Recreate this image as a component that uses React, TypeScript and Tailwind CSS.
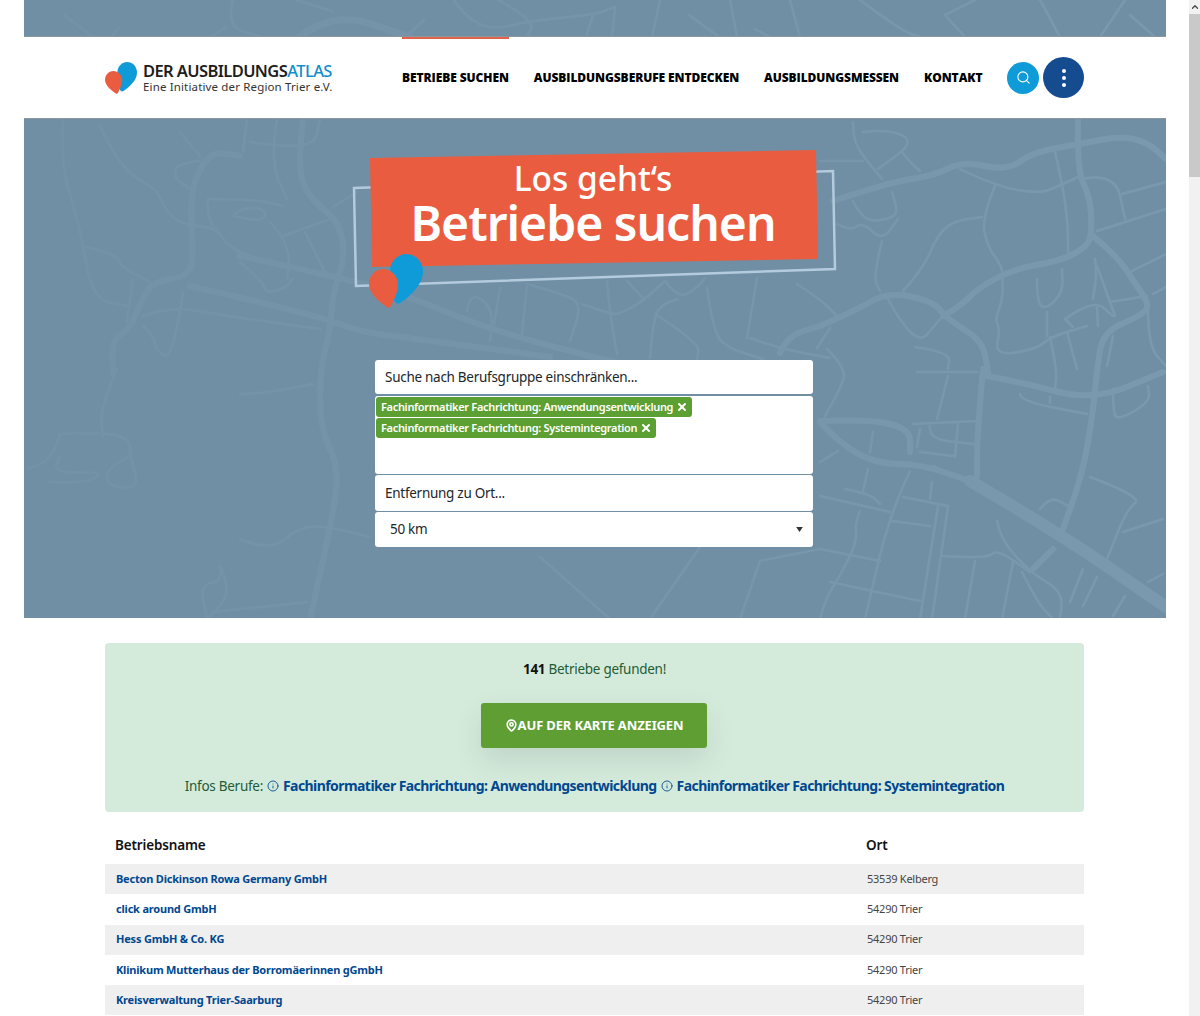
import { ChevronUp, Info, MapPin, Search, X } from "lucide-react";

type Pt = [number, number];

// map traced in page coordinates, the viewBox below takes care of the offset
const wideRoads: Pt[][] = [
  [[833, 200], [890, 181], [933, 175], [963, 160], [1007, 170], [1033, 151], [1080, 143], [1120, 135], [1147, 141], [1166, 158]],
  [[1078, 118], [1077, 171], [1090, 195], [1092, 231], [1087, 246], [1060, 260], [1013, 268], [977, 288], [963, 303], [943, 315]],
  [[820, 325], [853, 311], [887, 291], [933, 300], [947, 318], [983, 340], [988, 372]],
  [[1093, 235], [1117, 255], [1137, 285], [1150, 305], [1140, 315], [1103, 331], [1097, 368], [1093, 411], [1083, 471], [1063, 528]],
  [[983, 368], [977, 435], [977, 475]],
  [[987, 375], [1020, 381], [1093, 400], [1163, 371]],
  [[820, 420], [870, 418], [910, 428], [910, 451]],
  [[820, 421], [840, 443], [877, 463], [920, 463], [970, 480]],
  [[240, 155], [220, 151], [207, 156], [190, 188], [193, 251], [190, 275], [153, 281], [142, 298], [130, 328], [112, 338], [113, 372]],
  [[303, 118], [297, 168], [310, 198], [340, 221], [345, 258], [333, 291], [330, 331], [320, 368], [320, 428], [340, 468], [330, 528], [310, 618]],
  [[240, 255], [360, 281], [413, 297], [493, 330], [617, 362]],
  [[190, 285], [320, 315], [360, 331], [417, 338], [550, 356]],
  [[780, 352], [787, 335], [820, 325]],
  [[1053, 548], [1033, 568]],
];

const widestRoads: Pt[][] = [[[970, 480], [1053, 528], [1166, 606]]];

const thinRoads: Pt[][] = [
  [[853, 121], [853, 138], [863, 155], [882, 178]],
  [[863, 131], [890, 128], [915, 141], [878, 168]],
  [[902, 151], [910, 161], [920, 170]],
  [[820, 160], [863, 160]],
  [[853, 200], [863, 221], [890, 218], [898, 211], [892, 191]],
  [[837, 223], [850, 230], [863, 221], [882, 240], [898, 218]],
  [[882, 240], [873, 276], [880, 290]],
  [[903, 290], [923, 268], [937, 235], [953, 220], [982, 216]],
  [[995, 185], [982, 216], [987, 245], [1002, 265], [1003, 281], [1002, 301], [995, 318], [1000, 328], [995, 355], [1037, 348], [1050, 336], [1087, 325]],
  [[960, 168], [995, 185], [1040, 193], [1063, 183], [1078, 176]],
  [[1055, 151], [1063, 185], [1068, 225], [1068, 251]],
  [[1080, 178], [1115, 171], [1125, 218]],
  [[1122, 193], [1166, 181]],
  [[1097, 230], [1166, 208]],
  [[1130, 271], [1166, 253]],
  [[888, 298], [915, 348], [940, 318]],
  [[915, 346], [950, 351], [948, 368]],
  [[1037, 278], [1037, 303], [1047, 308], [1063, 291], [1062, 268]],
  [[1047, 311], [1047, 335]],
  [[1065, 318], [1093, 298], [1113, 315]],
  [[1095, 258], [1097, 271], [1093, 298]],
  [[1097, 265], [1115, 315]],
  [[1110, 301], [1147, 295]],
  [[1097, 305], [1098, 325]],
  [[1065, 318], [1073, 326]],
  [[1148, 305], [1148, 345], [1166, 365]],
  [[1067, 331], [1077, 368]],
  [[1050, 336], [1057, 368], [1055, 388]],
  [[1153, 293], [1166, 286]],
  [[1113, 335], [1107, 365]],
  [[827, 348], [847, 368], [840, 388], [825, 415]],
  [[917, 371], [977, 371]],
  [[948, 375], [937, 418]],
  [[913, 423], [977, 420]],
  [[930, 425], [928, 438], [973, 443]],
  [[958, 423], [955, 456]],
  [[1020, 393], [1020, 400], [1087, 413]],
  [[1050, 396], [1050, 402]],
  [[1113, 388], [1113, 408], [1117, 420], [1150, 401], [1148, 385]],
  [[1090, 476], [1143, 496], [1127, 508], [1107, 558]],
  [[1123, 531], [1163, 518]],
  [[1040, 508], [1050, 495], [1068, 505]],
  [[997, 520], [1000, 538], [1030, 571], [1063, 591], [1060, 618]],
  [[1022, 571], [1037, 601], [1053, 618]],
  [[943, 555], [987, 558], [997, 548], [1030, 571]],
  [[1013, 561], [1002, 618]],
  [[975, 560], [965, 618]],
  [[948, 505], [932, 618]],
  [[938, 505], [920, 618]],
  [[903, 496], [948, 505]],
  [[910, 470], [890, 511], [865, 618]],
  [[932, 481], [930, 498]],
  [[892, 520], [930, 525]],
  [[868, 468], [863, 490]],
  [[820, 495], [890, 511]],
  [[845, 488], [870, 493], [880, 503]],
  [[860, 510], [855, 521], [857, 541], [840, 575], [827, 595], [820, 618]],
  [[820, 548], [880, 560]],
  [[830, 581], [877, 591], [920, 600]],
  [[1083, 568], [1070, 601]],
  [[1097, 576], [1083, 605]],
  [[1125, 595], [1113, 615]],
  [[1148, 581], [1163, 573]],
  [[873, 431], [870, 451]],
  [[920, 428], [917, 446]],
  [[920, 451], [953, 455]],
  [[933, 465], [960, 478]],
  [[820, 461], [838, 450]],
  [[467, 310], [470, 290], [493, 307], [490, 340]],
  [[500, 287], [493, 330]],
  [[527, 283], [522, 333]],
  [[527, 283], [563, 293], [582, 303], [570, 340]],
  [[582, 303], [610, 313], [620, 313], [643, 300], [665, 280]],
  [[607, 280], [610, 313], [617, 353]],
  [[627, 280], [643, 297]],
  [[665, 280], [678, 298], [697, 287], [705, 277]],
  [[678, 298], [660, 303], [653, 323], [650, 357]],
  [[655, 313], [700, 342], [697, 358]],
  [[707, 287], [713, 330], [727, 347], [763, 358]],
  [[757, 277], [747, 337]],
  [[750, 337], [777, 347], [830, 357]],
  [[797, 283], [820, 298], [837, 315]],
  [[817, 347], [830, 327]],
  [[63, 118], [60, 161], [80, 225], [92, 298], [127, 305]],
  [[82, 245], [117, 253], [120, 265], [150, 281]],
  [[100, 125], [120, 168], [157, 188], [163, 205], [177, 221], [197, 225], [217, 228], [230, 248], [270, 262]],
  [[200, 160], [178, 162], [173, 176], [190, 188]],
  [[208, 198], [253, 198], [283, 205]],
  [[233, 215], [240, 206], [267, 208], [263, 221], [233, 215]],
  [[208, 198], [207, 218], [220, 232]],
  [[270, 221], [283, 235], [290, 258], [287, 278]],
  [[283, 235], [330, 218]],
  [[305, 231], [327, 275]],
  [[333, 206], [357, 191]],
  [[240, 261], [263, 281], [267, 293], [287, 286], [292, 278]],
  [[133, 278], [127, 321]],
  [[183, 291], [173, 358], [157, 351], [153, 335], [143, 325]],
  [[143, 315], [170, 305], [227, 315], [320, 328]],
  [[250, 141], [313, 151], [320, 118]],
  [[277, 118], [270, 161], [287, 198]],
  [[247, 118], [243, 151]],
  [[180, 131], [200, 155]],
  [[60, 433], [103, 431], [130, 438], [130, 455], [140, 488], [107, 485], [107, 468], [130, 455]],
  [[60, 433], [53, 458], [27, 468]],
  [[50, 481], [83, 483], [107, 471], [53, 472], [60, 455]],
  [[117, 368], [100, 408], [103, 435]],
  [[240, 393], [260, 393], [313, 383]],
  [[240, 538], [270, 551], [300, 525], [330, 526], [370, 536]],
  [[220, 565], [223, 581], [200, 583], [207, 618]],
  [[220, 565], [233, 591], [207, 618]],
  [[213, 611], [307, 601]],
  [[700, 546], [650, 618]],
  [[760, 560], [820, 548]],
  [[760, 560], [740, 618]],
  [[540, 556], [610, 618]],
];

const stripWide: Pt[][] = [[[300, 37], [332, 11], [410, 37]]];

const stripThin: Pt[][] = [
  [[64, 15], [93, 37]],
  [[119, 27], [112, 37]],
  [[233, 0], [226, 27], [262, 37]],
  [[226, 27], [211, 37]],
  [[296, 0], [332, 11]],
  [[424, 20], [410, 33]],
  [[454, 0], [476, 33], [535, 20], [593, 15], [615, 7]],
  [[498, 0], [535, 20], [527, 37]],
  [[593, 15], [586, 37]],
  [[615, 7], [612, 37]],
  [[660, 0], [652, 37]],
  [[689, 15], [719, 37]],
  [[730, 0], [737, 37]],
  [[755, 29], [770, 37]],
  [[790, 0], [800, 37]],
  [[860, 0], [900, 30], [920, 37]],
  [[945, 15], [975, 0]],
  [[945, 15], [965, 37]],
  [[1040, 0], [1060, 37]],
  [[1100, 37], [1125, 0]],
  [[1130, 15], [1155, 37]],
];

// rounds the corners of a traced polyline
function smooth(pts: Pt[]) {
  let d = `M${pts[0][0]} ${pts[0][1]}`;
  for (let i = 1; i < pts.length - 1; i++) {
    const mx = (pts[i][0] + pts[i + 1][0]) / 2;
    const my = (pts[i][1] + pts[i + 1][1]) / 2;
    d += `Q${pts[i][0]} ${pts[i][1]} ${mx} ${my}`;
  }
  const last = pts[pts.length - 1];
  return d + `L${last[0]} ${last[1]}`;
}

function Roads({ lines, width }: { lines: Pt[][]; width: number }) {
  return (
    <g fill="none" stroke="url(#road)" strokeWidth={width} strokeLinecap="round" strokeLinejoin="round">
      {lines.map((l, i) => (
        <path key={i} d={smooth(l)} />
      ))}
    </g>
  );
}

// the map fades out towards the left edge
function RoadPaint() {
  return (
    <defs>
      <linearGradient id="road" gradientUnits="userSpaceOnUse" x1="24" y1="0" x2="1166" y2="0">
        <stop offset="0" stopColor="#7492a7" />
        <stop offset="0.4" stopColor="#7593a9" />
        <stop offset="1" stopColor="#7b99ae" />
      </linearGradient>
    </defs>
  );
}

function Pins({ className }: { className: string }) {
  return (
    <svg viewBox="0 0 54 54" className={className}>
      <path fill="#0f9bd7" d="M37 0C47 0 54 8 54 18C54 31 39 44 31 49C28 50.5 26 49 25 46L21 15C22 7 29 0 37 0Z" />
      <path fill="#ea5c3f" d="M14 15C22 15 29 22 29 30C29 38 25 46 22 52C21 54 19 54 18 53C12 49 0 40 0 30C0 22 6 15 14 15Z" />
    </svg>
  );
}

const nav = [
  { label: "Betriebe suchen", active: true },
  { label: "Ausbildungsberufe entdecken", active: false },
  { label: "Ausbildungsmessen", active: false },
  { label: "Kontakt", active: false },
];

const rows = [
  { name: "Becton Dickinson Rowa Germany GmbH", ort: "53539 Kelberg" },
  { name: "click around GmbH", ort: "54290 Trier" },
  { name: "Hess GmbH & Co. KG", ort: "54290 Trier" },
  { name: "Klinikum Mutterhaus der Borromäerinnen gGmbH", ort: "54290 Trier" },
  { name: "Kreisverwaltung Trier-Saarburg", ort: "54290 Trier" },
];

const chips = [
  "Fachinformatiker Fachrichtung: Anwendungsentwicklung",
  "Fachinformatiker Fachrichtung: Systemintegration",
];

function Header() {
  return (
    <header className="h-[81px] bg-white pl-[81px] flex">
      <a className="w-[297px] flex items-center gap-[6px]">
        <Pins className="w-8 h-8 mt-[1px]" />
        <div className="w-[190px] mt-[1px]">
          <div className="text-[16.5px] leading-[17px] font-semibold tracking-[-0.6px] text-[#1d1d1b] whitespace-nowrap">
            DER AUSBILDUNGS<span className="text-[#0f8fcb] font-medium">ATLAS</span>
          </div>
          <div className="text-[11.5px] leading-[15px] tracking-[0.15px] text-[#333] whitespace-nowrap">
            Eine Initiative der Region Trier e.V.
          </div>
        </div>
      </a>
      <nav className="flex gap-[25px] font-['Open_Sans',sans-serif]">
        {nav.map((n) => (
          <a
            key={n.label}
            className={`flex items-center border-t-2 border-b-2 border-b-transparent text-[12px] font-extrabold uppercase tracking-[-0.08px] text-black whitespace-nowrap ${
              n.active ? "border-t-[#e0634a]" : "border-t-transparent"
            }`}
          >
            {n.label}
          </a>
        ))}
      </nav>
      <div className="flex items-center ml-[25px]">
        <button className="w-8 h-8 rounded-full bg-[#0f9bd7] flex items-center justify-center">
          <Search size={15} strokeWidth={1.75} className="text-white" />
        </button>
        <button className="w-[41px] h-[41px] ml-1 rounded-full bg-[#154b8f] flex flex-col items-center justify-center gap-[3px]">
          <span className="w-1 h-1 rounded-full bg-white" />
          <span className="w-1 h-1 rounded-full bg-white" />
          <span className="w-1 h-1 rounded-full bg-white" />
        </button>
      </div>
    </header>
  );
}

function Hero() {
  return (
    <section className="relative h-[500px] bg-[#708fa5] overflow-hidden border-t border-t-[#8a979f]">
      <svg viewBox="24 118 1142 500" className="absolute inset-0 w-[1142px] h-[500px]">
        <RoadPaint />
        <Roads lines={thinRoads} width={2.5} />
        <Roads lines={wideRoads} width={6} />
        <Roads lines={widestRoads} width={12} />
      </svg>

      {/* title graphic: tilted frame and orange plate behind the text */}
      <svg viewBox="24 118 1142 500" className="absolute inset-0 w-[1142px] h-[500px]">
        <polygon points="354,187 833,170 835,268 356,285" fill="none" stroke="#b3cbdd" strokeWidth="2.5" />
        <polygon points="370,157 816,149 818,258 372,266" fill="#ea5c3f" />
      </svg>
      <Pins className="absolute left-[345px] top-[135px] w-[54px] h-[54px]" />

      <div className="relative flex flex-col items-center pt-[37px] pr-[4px] text-white">
        <h2 className="text-[33.5px] leading-[44px] font-medium">Los geht‘s</h2>
        <h1 className="text-[48px] leading-[46px] font-semibold tracking-[-1px]">Betriebe suchen</h1>
      </div>

      <form className="relative w-[438px] mt-[114px] ml-[351px] flex flex-col text-[13.5px] tracking-[-0.28px] text-[#212529]">
        <div className="h-[34px] bg-white rounded-[3px] px-[10px] flex items-center">Suche nach Berufsgruppe einschränken...</div>
        <div className="h-[78px] mt-[2px] bg-white rounded-[3px] p-[1px] flex flex-col items-start gap-[1px]">
          {chips.map((c) => (
            <span
              key={c}
              className="h-5 bg-[#5c9f32] rounded-[3px] pl-[5px] pr-[4px] flex items-center gap-[3px] text-[11px] font-semibold tracking-[-0.32px] text-white whitespace-nowrap"
            >
              {c}
              <X size={12} strokeWidth={4} />
            </span>
          ))}
        </div>
        <div className="h-[36px] mt-[1px] bg-white rounded-[3px] px-[10px] flex items-center">Entfernung zu Ort...</div>
        <div className="h-[35px] mt-[1px] bg-white rounded-[3px] pl-[15px] pr-[10px] flex items-center justify-between">
          50 km
          <svg viewBox="0 0 8 6" className="w-[7px] h-[5px]">
            <polygon points="0,0 8,0 4,6" fill="#333" />
          </svg>
        </div>
      </form>
    </section>
  );
}

function Results() {
  return (
    <div className="w-[979px] ml-[105px] mt-[25px]">
      <div className="h-[169px] bg-[#d4ebdc] rounded-[4px] flex flex-col items-center text-[13.5px] tracking-[-0.28px] text-[#1f5c34] pt-[15px]">
        <p className="leading-[22px]">
          <strong className="text-[#111]">141</strong> Betriebe gefunden!
        </p>
        <a className="mt-[23px] mr-[1px] w-[226px] h-[45px] bg-[#5e9e32] rounded-[3px] flex items-center justify-center text-[13px] font-bold uppercase tracking-[-0.15px] text-white shadow-[0_12px_30px_rgba(0,0,0,0.1)]">
          <MapPin size={13} strokeWidth={3} />
          Auf der Karte anzeigen
        </a>
        <p className="mt-[27px] flex items-center gap-[4px] leading-[22px] whitespace-nowrap">
          Infos Berufe:
          {chips.map((c) => (
            <a key={c} className="flex items-center gap-[4px] text-[#00478f] text-[14px] font-bold tracking-[-0.57px]">
              <Info size={12} strokeWidth={1.75} />
              {c}
            </a>
          ))}
        </p>
      </div>

      <table className="w-full mt-[20px] border-collapse table-fixed">
        <thead>
          <tr className="h-[32px] text-left text-[13.5px] font-semibold text-[#111] tracking-[-0.15px]">
            <th className="pl-[10px] pb-[5px] font-semibold w-[751px]">Betriebsname</th>
            <th className="pl-[10px] pb-[5px] font-semibold">Ort</th>
          </tr>
        </thead>
        <tbody>
          {rows.map((r, i) => (
            <tr key={r.name} className={`h-[30.25px] text-[11px] ${i % 2 === 0 ? "bg-[#efefef]" : "bg-white"}`}>
              <td className="pl-[11px] font-bold tracking-[-0.2px] text-[#00478f]">{r.name}</td>
              <td className="pl-[11px] tracking-[-0.25px] text-[#444]">{r.ort}</td>
            </tr>
          ))}
        </tbody>
      </table>
    </div>
  );
}

export default function App() {
  return (
    <div className="flex h-[1016px] overflow-hidden bg-white font-['Noto_Sans',sans-serif]">
      <main className="w-[1189px] shrink-0">
        <div className="ml-6 w-[1142px]">
          <div className="h-[37px] bg-[#708fa5] overflow-hidden border-b border-b-[#8a979f]">
            <svg viewBox="24 0 1142 37" className="w-[1142px] h-[37px]">
              <RoadPaint />
              <Roads lines={stripThin} width={2.5} />
              <Roads lines={stripWide} width={7} />
            </svg>
          </div>
          <Header />
          <Hero />
        </div>
        <Results />
      </main>
      <aside className="w-[11px] bg-[#f1f1f1] flex flex-col">
        <div className="h-[14px] flex items-center justify-center">
          <ChevronUp size={10} strokeWidth={3} className="text-[#444]" />
        </div>
        <div className="h-[163px] bg-[#c9c9c9]" />
      </aside>
    </div>
  );
}
